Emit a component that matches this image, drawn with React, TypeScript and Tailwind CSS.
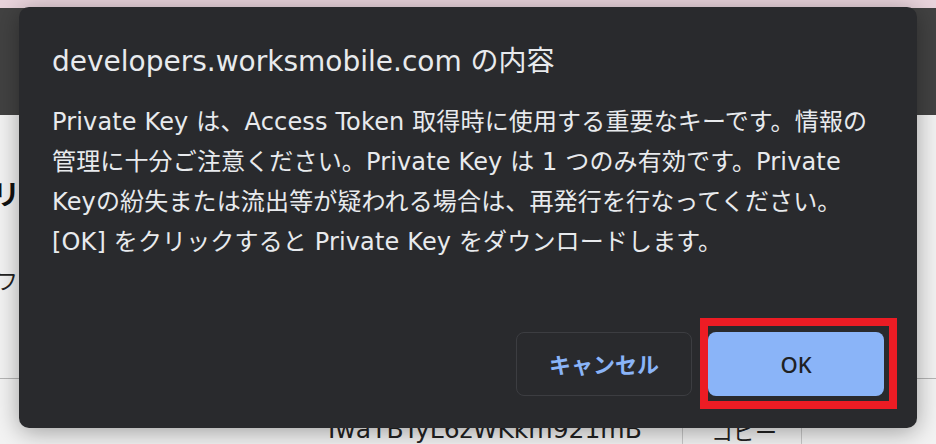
import React from "react";

const font = {
  fontFamily: '"Noto Sans", "Noto Sans CJK JP", sans-serif',
};

const wideFont = {
  fontFamily: '"DejaVu Sans", "Noto Sans CJK JP", sans-serif',
};

const bodyLines = [
  "Private Key は、Access Token 取得時に使用する重要なキーです。情報の",
  "管理に十分ご注意ください。Private Key は 1 つのみ有効です。Private",
  "Keyの紛失または流出等が疑われる場合は、再発行を行なってください。",
  "[OK] をクリックすると Private Key をダウンロードします。",
];

const PageBehind = () => (
  <div className="flex h-[444px] w-[936px] flex-col bg-[#f3f3f3]" style={font}>
    <div className="h-[8px] bg-[#e9d4dc]" />
    <div className="h-[107px] bg-[#424242]" />
    <div className="flex flex-1 flex-col">
      <div className="-ml-[8px] mt-[61px] h-[36px] text-[28px] font-bold leading-[36px] text-[#111]">
        リ
      </div>
      <div className="-ml-[4px] mt-[53px] h-[30px] text-[22px] leading-[30px] text-[#222]">
        フ
      </div>
      <div className="mt-[83px] h-px bg-[#b5b5b5]" />
      <div className="flex h-[65px] items-end">
        <div
          className="w-[682px] pl-[328px] text-[25px] leading-[28px] text-[#222]"
          style={wideFont}
        >
          IwaTBTyL6zWKkm921mB
        </div>
        <div className="flex h-full w-[120px] items-end border-x border-[#c8c8c8] pl-[28px] text-[22px] leading-[26px] text-[#222]">
          コピー
        </div>
      </div>
    </div>
  </div>
);

export default function App() {
  return (
    <div className="relative h-[444px] w-[936px] overflow-hidden">
      <PageBehind />
      <div
        className="absolute left-[19px] top-[7px] flex h-[421px] w-[898px] flex-col rounded-[10px] bg-[#292a2d] shadow-[0_4px_24px_rgba(0,0,0,0.35)]"
        style={font}
      >
        <div
          className="pl-[33px] pt-[38px] text-[28px] leading-[34px] text-[#e8eaed]"
          style={wideFont}
        >
          developers.worksmobile.com の内容
        </div>
        <div
          className="mt-[23px] pl-[33px] text-[24px] leading-[40px] tracking-[0.15px] text-[#e8eaed]"
          style={wideFont}
        >
          {bodyLines.map((l) => (
            <div key={l} className="whitespace-nowrap">
              {l}
            </div>
          ))}
        </div>
        <div className="mt-auto flex justify-end gap-[16px] pb-[32px] pr-[33px]">
          <button className="h-[64px] w-[176px] rounded-[8px] border border-[#3c3d41] text-[22px] font-semibold text-[#8ab4f8]">
            キャンセル
          </button>
          <div className="relative">
            <button className="h-[64px] w-[176px] rounded-[8px] bg-[#8ab4f8] text-[22px] font-medium text-[#202124]">
              OK
            </button>
            <div className="pointer-events-none absolute -bottom-[13px] -left-[8px] -right-[13px] -top-[14px] border-[8px] border-[#ec1c24]" />
          </div>
        </div>
      </div>
    </div>
  );
}
